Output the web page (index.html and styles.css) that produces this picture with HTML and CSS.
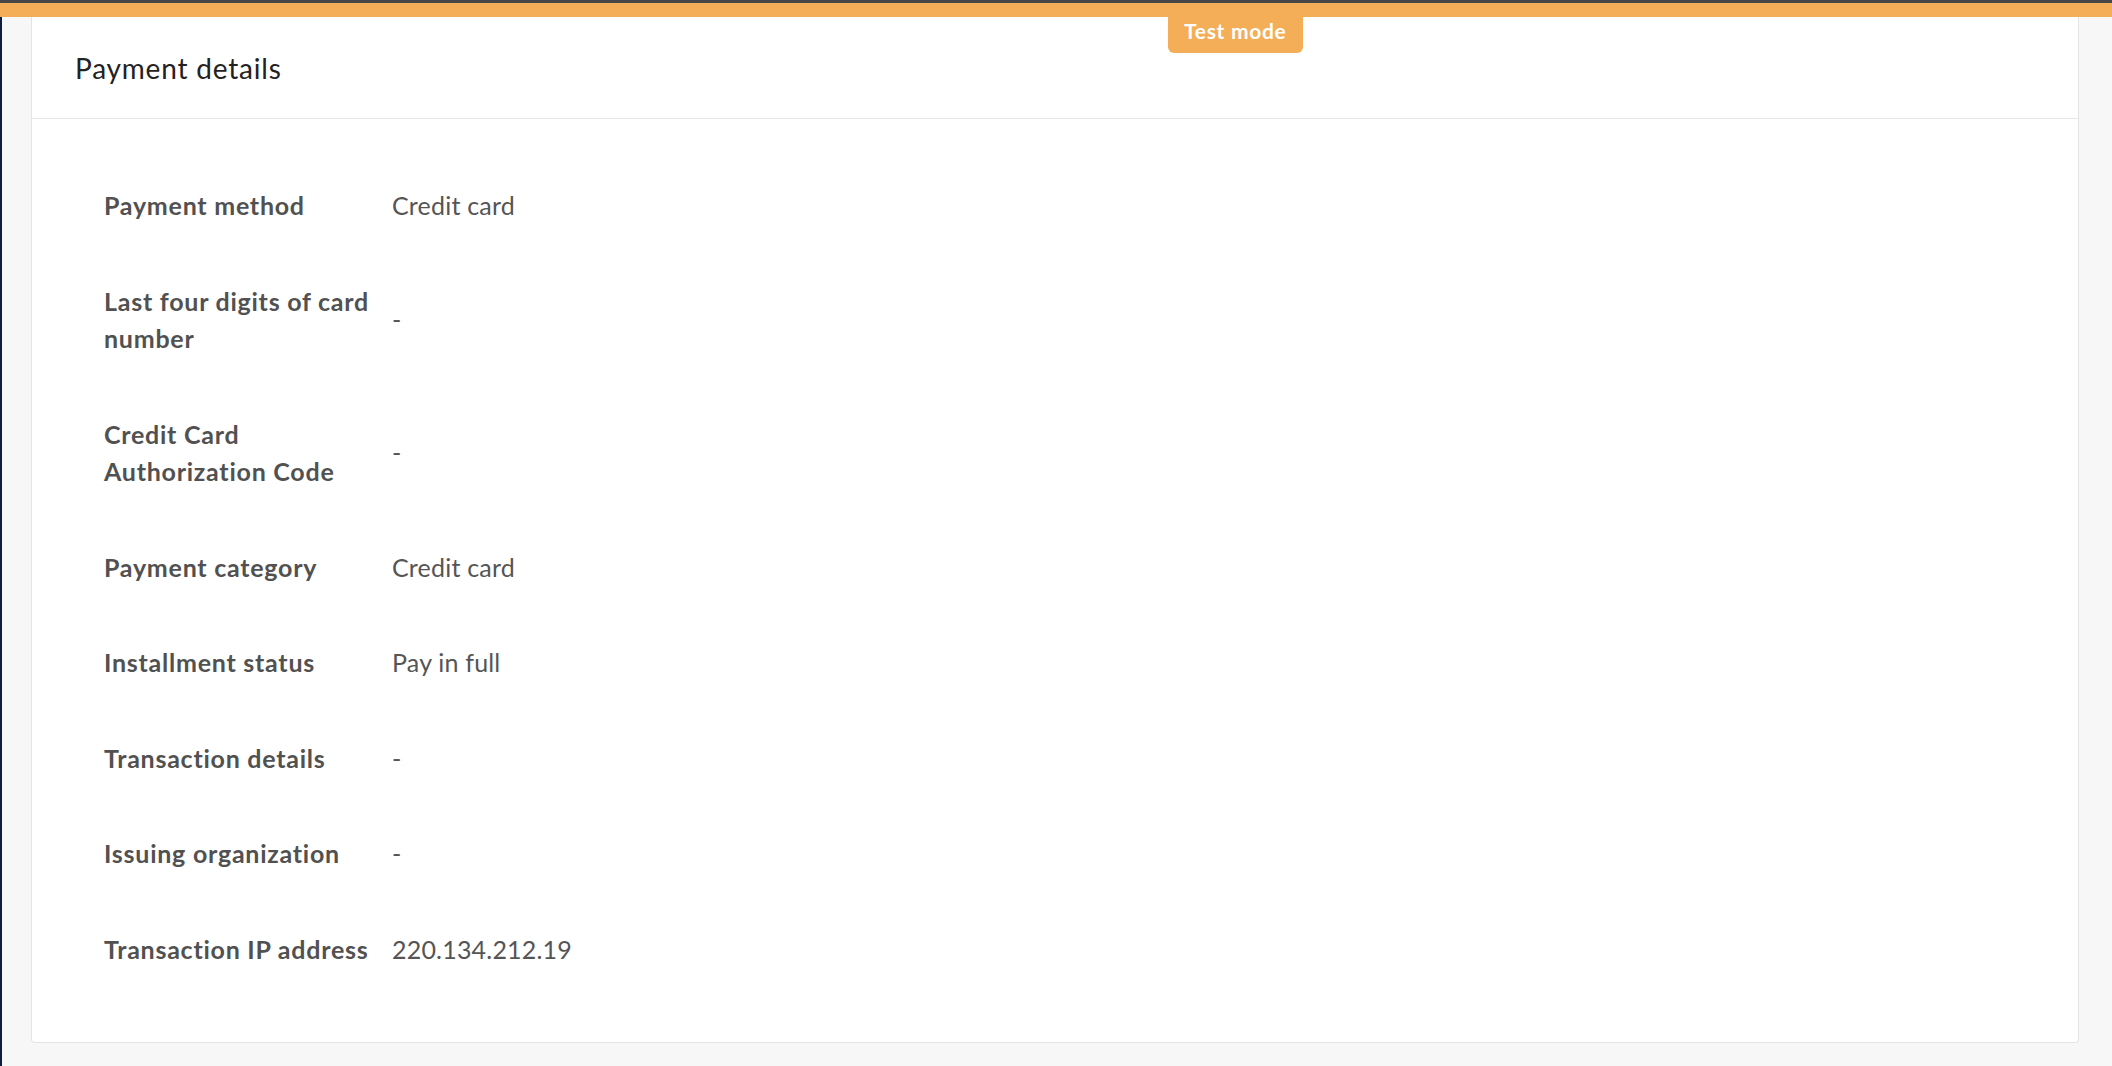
FILE: index.html
```html
<!DOCTYPE html>
<html lang="en">

<head>
    <meta charset="utf-8"/>
    <title>Payment details</title>
    <link rel="stylesheet" href="styles.css">
</head>

<body>
<div class="chrome"></div>
<div class="testbar">
    <span class="badge">Test mode</span>
</div>
<div class="page">
    <div class="card">
        <div class="cardHead">Payment details</div>
        <div class="cardBody">
            <div class="row">
                <div class="label">Payment method</div>
                <div class="value">Credit card</div>
            </div>
            <div class="row">
                <div class="label">Last four digits of card number</div>
                <div class="value">-</div>
            </div>
            <div class="row">
                <div class="label">Credit Card Authorization Code</div>
                <div class="value">-</div>
            </div>
            <div class="row">
                <div class="label">Payment category</div>
                <div class="value">Credit card</div>
            </div>
            <div class="row">
                <div class="label">Installment status</div>
                <div class="value">Pay in full</div>
            </div>
            <div class="row">
                <div class="label">Transaction details</div>
                <div class="value">-</div>
            </div>
            <div class="row">
                <div class="label">Issuing organization</div>
                <div class="value">-</div>
            </div>
            <div class="row">
                <div class="label">Transaction IP address</div>
                <div class="value">220.134.212.19</div>
            </div>
        </div>
    </div>
</div>
</body>
</html>
```

FILE: styles.css
```css
* {
    padding: 0;
    margin: 0;
    box-sizing: border-box;
}

body {
    height: 1066px;
    overflow: hidden;
    background-color: #f7f7f7;
    font-family: Lato, "Open Sans", sans-serif;
    color: #555;
}

.chrome {
    height: 3px;
    background-color: #474747;
}

.testbar {
    position: relative;
    height: 14px;
    background-color: #f3ae57;
}

.badge {
    position: absolute;
    left: 1168px;
    top: 14px;
    padding: 3px 16px 11px;
    font-size: 21px;
    line-height: 22px;
    font-weight: 700;
    letter-spacing: 0.7px;
    color: #fff;
    background-color: #f3ae57;
    border-radius: 0 0 6px 6px;
}

.page {
    height: 1049px;
    padding: 0 33px 23px 29px;
    border-left: 2px solid #0f1d3f;
}

.card {
    height: 100%;
    background-color: #fff;
    border: 1px solid #e4e4e4;
    border-top: none;
    border-radius: 0 0 4px 4px;
}

.cardHead {
    height: 102px;
    display: flex;
    align-items: center;
    padding-left: 43px;
    font-size: 28px;
    letter-spacing: 0.8px;
    color: #222;
    border-bottom: 1px solid #e6e6e6;
}

.cardBody {
    padding: 39px 0 43px 72px;
}

.row {
    display: grid;
    grid-template-columns: 288px 1fr;
    align-items: center;
    padding: 29px 0;
    font-size: 25px;
    line-height: 37.5px;
}

.label {
    padding-right: 12px;
    font-weight: 700;
    letter-spacing: 0.75px;
    color: #515151;
}

.value {
    font-weight: 400;
    letter-spacing: 0.2px;
    color: #555;
}
```
